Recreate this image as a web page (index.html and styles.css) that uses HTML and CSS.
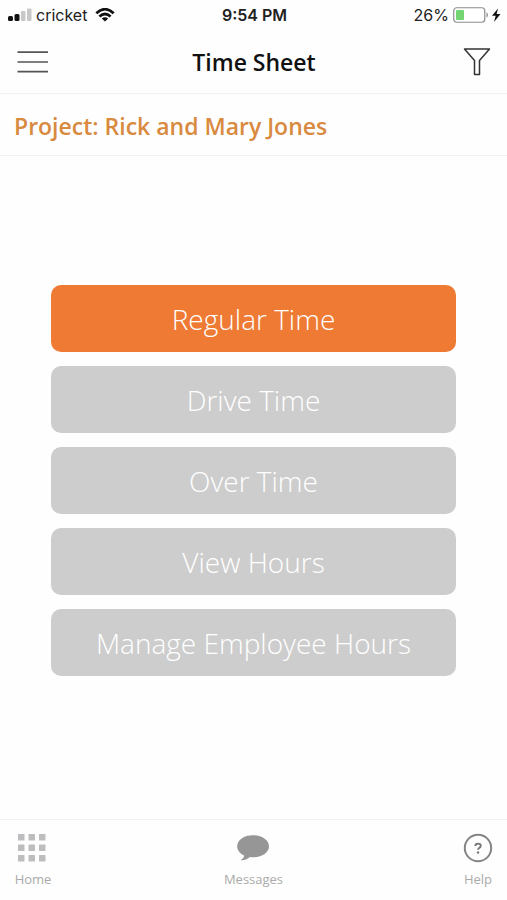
FILE: index.html
```html
<!DOCTYPE html>
<html lang="en">
<head>
<meta charset="utf-8">
<meta name="viewport" content="width=device-width, initial-scale=1">
<title>Time Sheet</title>
<link rel="stylesheet" href="styles.css">
</head>
<body>
<div class="status-bar">
  <div class="status-left">
    <svg class="signal" width="24" height="14" viewBox="0 0 24 14" aria-hidden="true">
      <rect x="0" y="8" width="5" height="5" rx="1.5" fill="#111"/>
      <rect x="6.5" y="6" width="5" height="7" rx="1.5" fill="#111"/>
      <rect x="13" y="3" width="4.500" height="10" rx="1" fill="#c8c8c8"/>
      <rect x="19" y="0.500" width="4.500" height="12.500" rx="1" fill="#c8c8c8"/>
    </svg>
    <span class="carrier">cricket</span>
    <svg class="wifi" width="20" height="14" viewBox="0 0 20 14" aria-hidden="true">
      <path d="M1.300 5.200Q10 -2.800 18.700 5.200M4.400 8.500Q10 3.500 15.600 8.500" fill="none" stroke="#111" stroke-width="2.700"/>
      <path d="M10 13.500L6.800 10.600Q10 8 13.200 10.600Z" fill="#111"/>
    </svg>
  </div>
  <span class="clock">9:54 PM</span>
  <div class="status-right">
    <span>26%</span>
    <svg class="battery" width="48" height="18" viewBox="0 0 48 18" aria-hidden="true">
      <rect x="0.750" y="1.750" width="31" height="14.500" rx="3" fill="#fff" stroke="#8c8c8c" stroke-width="1.200"/>
      <rect x="3" y="4" width="8" height="10" rx="1" fill="#74d672"/>
      <path d="M33.500 6Q36.500 9 33.500 12Z" fill="#8c8c8c"/>
      <path d="M45 2.500L39 9.800H42.700L41 16L47.500 8H43.600Z" fill="#111"/>
    </svg>
  </div>
</div>

<header class="app-header">
  <button class="icon-button" type="button" aria-label="Menu">
    <svg width="32" height="24" viewBox="0 0 32 24" aria-hidden="true">
      <path d="M0.500 2.200H31M0.500 12H31M0.500 21.700H31" stroke="#555" stroke-width="1.700" fill="none"/>
    </svg>
  </button>
  <h1 class="title">Time Sheet</h1>
  <button class="icon-button icon-button-end" type="button" aria-label="Filter">
    <svg width="28" height="30" viewBox="0 0 28 30" aria-hidden="true">
      <path d="M1.500 2H26.500L16.500 13.500V27.500H11.500V13.500Z" stroke="#333" stroke-width="1.500" stroke-linejoin="round" fill="none"/>
    </svg>
  </button>
</header>

<h2 class="project">Project: Rick and Mary Jones</h2>

<main class="actions">
  <button class="action action-primary" type="button">Regular Time</button>
  <button class="action" type="button">Drive Time</button>
  <button class="action" type="button">Over Time</button>
  <button class="action" type="button">View Hours</button>
  <button class="action" type="button">Manage Employee Hours</button>
</main>

<nav class="tab-bar">
  <a class="tab" href="#home">
    <svg width="38" height="32" viewBox="0 0 38 32" aria-hidden="true">
      <g fill="#bdbdbf">
        <rect x="4" y="2" width="6.500" height="6.500" rx="0.500"/><rect x="14.500" y="2" width="6.500" height="6.500" rx="0.500"/><rect x="25" y="2" width="6.500" height="6.500" rx="0.500"/>
        <rect x="4" y="12.500" width="6.500" height="6.500" rx="0.500"/><rect x="14.500" y="12.500" width="6.500" height="6.500" rx="0.500"/><rect x="25" y="12.500" width="6.500" height="6.500" rx="0.500"/>
        <rect x="4" y="23" width="6.500" height="6.500" rx="0.500"/><rect x="14.500" y="23" width="6.500" height="6.500" rx="0.500"/><rect x="25" y="23" width="6.500" height="6.500" rx="0.500"/>
      </g>
    </svg>
    <span>Home</span>
  </a>
  <a class="tab" href="#messages">
    <svg width="34" height="32" viewBox="0 0 34 32" aria-hidden="true">
      <path d="M17 3.200C8 3.200 1.200 8 1.200 14.200C1.200 18.200 3.800 21.400 8.200 23.400C8 25.500 6.500 27 4.500 28.200C8.500 28.600 11.800 27 13.800 25C14.800 25.200 15.900 25.200 17 25.200C26 25.200 33 20.500 33 14.200C33 8 26 3.200 17 3.200Z" fill="#969696"/>
    </svg>
    <span>Messages</span>
  </a>
  <a class="tab" href="#help">
    <svg width="30" height="32" viewBox="0 0 30 32" aria-hidden="true">
      <circle cx="15" cy="16" r="13.200" fill="none" stroke="#858585" stroke-width="2"/>
      <path d="M12.300 14C12.300 10.800 17.800 10.900 17.800 13.700C17.800 15.600 15 15.700 15 17.800" fill="none" stroke="#777" stroke-width="1.900"/>
      <circle cx="15" cy="20.500" r="1.200" fill="#777"/>
    </svg>
    <span>Help</span>
  </a>
</nav>
</body>
</html>
```

FILE: styles.css
```css
* {
  box-sizing: border-box;
}

body {
  margin: 0;
  min-height: 100vh;
  display: flex;
  flex-direction: column;
  background: #fefefe;
  color: #111;
  font-family: "Open Sans", sans-serif;
}

.status-bar {
  display: grid;
  grid-template-columns: 1fr auto 1fr;
  align-items: center;
  height: 30px;
  padding: 0 6px 0 8px;
  font-family: Inter, "Liberation Sans", sans-serif;
  font-size: 16px;
  line-height: 20px;
  color: #222;
}

.status-left,
.status-right {
  display: flex;
  align-items: center;
  gap: 4px;
}

.status-right {
  justify-content: flex-end;
}

.wifi {
  margin-left: 4px;
}

.clock {
  font-weight: 600;
}

.app-header {
  display: grid;
  grid-template-columns: 1fr auto 1fr;
  align-items: center;
  height: 64px;
  padding: 0 16px 0 17px;
  border-bottom: 1px solid #f2f2f2;
}

.icon-button {
  display: flex;
  justify-self: start;
  padding: 0;
  border: 0;
  background: none;
}

.icon-button-end {
  justify-self: end;
}

.title,
.project {
  margin: 0;
  font-size: 23px;
  font-weight: 580;
  line-height: 32px;
}

.project {
  padding: 16px 14px 13px;
  border-bottom: 1px solid #f2f2f2;
  color: #d88a3f;
}

.actions {
  flex: 1;
  display: flex;
  flex-direction: column;
  align-items: center;
  justify-content: center;
}

.action {
  width: 80%;
  height: 67px;
  margin: 0 0 14px;
  padding: 0;
  border: 0;
  border-radius: 10px;
  background: #cdcdcd;
  color: #fff;
  font-family: inherit;
  font-size: 28px;
  font-weight: 350;
}

.action-primary {
  background: #ee7a33;
}

.tab-bar {
  display: grid;
  grid-template-columns: 1fr auto 1fr;
  height: 81px;
  padding: 12px 14px 0;
  border-top: 1px solid #f2f2f2;
}

.tab {
  display: flex;
  flex-direction: column;
  align-items: center;
  justify-self: center;
  gap: 5px;
  color: #aaa;
  font-size: 13px;
  line-height: 20px;
  text-decoration: none;
}

.tab:first-child {
  justify-self: start;
}

.tab:last-child {
  justify-self: end;
}
```
